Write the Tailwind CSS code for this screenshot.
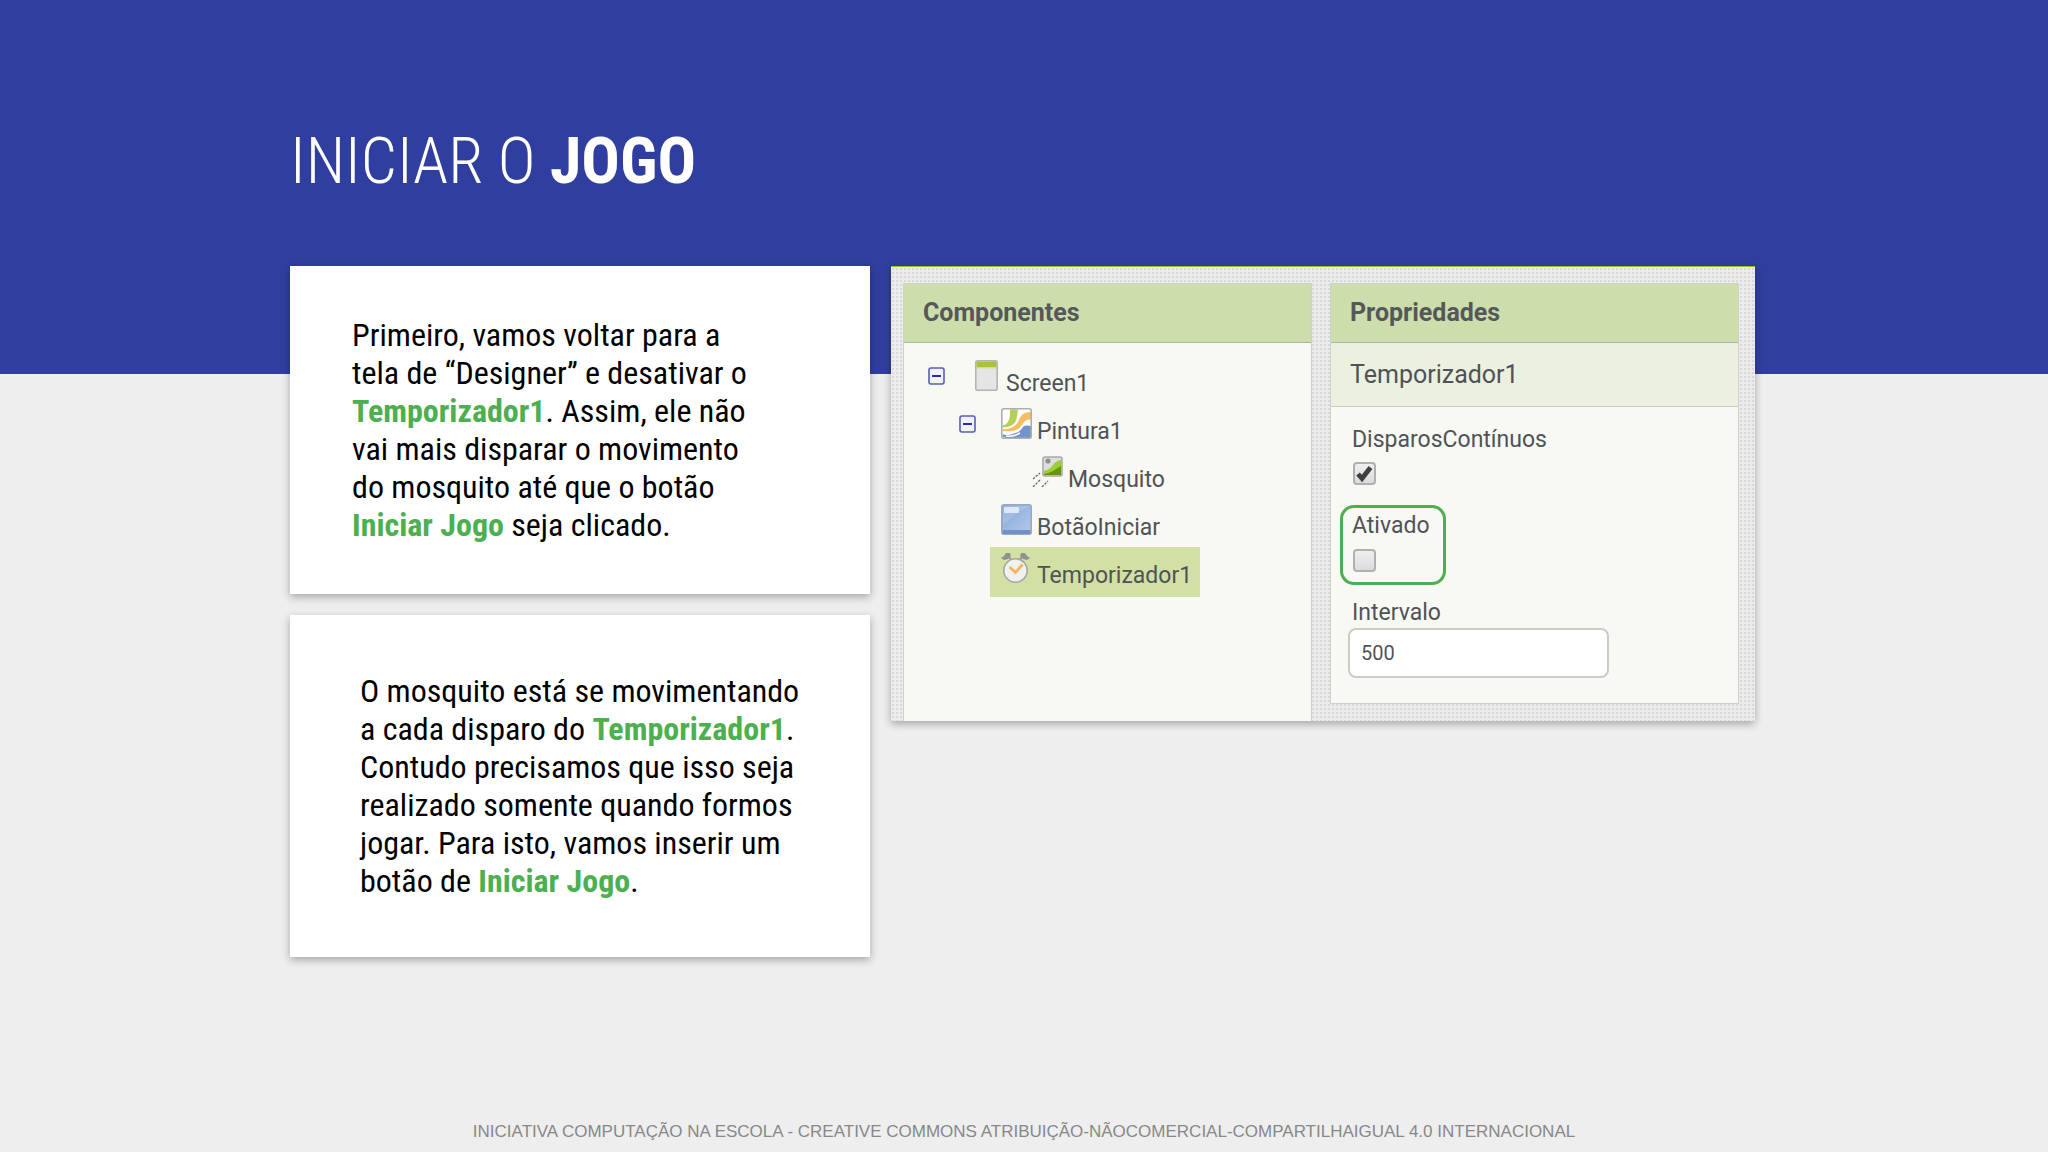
<!DOCTYPE html>
<html lang="pt-BR">

<head>
    <meta charset="UTF-8">
    <meta name="viewport" content="width=device-width, initial-scale=1.0">
    <script src="https://cdn.jsdelivr.net/npm/@tailwindcss/browser@4"></script>
    <title>Iniciar o Jogo</title>
</head>

<body class="flex min-h-screen flex-col bg-[#eeeeee] font-['Roboto_Condensed','Liberation_Sans_Narrow',Roboto,sans-serif] text-black">
    <header class="h-[374px] bg-[#303f9f] px-[290px] pt-[124px]">
        <h1 class="text-[64px] leading-[76px] font-light text-white">INICIAR O <b class="font-bold">JOGO</b></h1>
    </header>

    <main class="-mt-[108px] grid grid-cols-[580fr_864fr] items-start gap-[21px] pr-[293px] pl-[290px]">
        <div class="flex flex-col gap-[21px]">
            <section class="bg-white py-[50px] pl-[62px] shadow-[0_3px_8px_rgba(0,0,0,0.3)]">
                <p class="text-[32px] leading-[38px]">
                    Primeiro, vamos voltar para a<br>
                    tela de “Designer” e desativar o<br>
                    <b class="text-[#4caf50]">Temporizador1</b>. Assim, ele não<br>
                    vai mais disparar o movimento<br>
                    do mosquito até que o botão<br>
                    <b class="text-[#4caf50]">Iniciar Jogo</b> seja clicado.
                </p>
            </section>
            <section class="bg-white py-[57px] pl-[70px] shadow-[0_3px_8px_rgba(0,0,0,0.3)]">
                <p class="text-[32px] leading-[38px]">
                    O mosquito está se movimentando<br>
                    a cada disparo do <b class="text-[#4caf50]">Temporizador1</b>.<br>
                    Contudo precisamos que isso seja<br>
                    realizado somente quando formos<br>
                    jogar. Para isto, vamos inserir um<br>
                    botão de <b class="text-[#4caf50]">Iniciar Jogo</b>.
                </p>
            </section>
        </div>

        <!-- App Inventor designer -->
        <div class="grid h-[455px] grid-cols-2 gap-[18px] border-t border-[#8fc31f] bg-[#ececec] bg-[radial-gradient(circle_at_2px_2px,#d8d8d8_1px,transparent_1px)] bg-size-[4px_4px] pt-4 pr-4 pl-3 font-[Roboto,sans-serif] text-[#4f5358] shadow-[0_3px_8px_rgba(0,0,0,0.3)]">
            <section class="border-x border-t border-[#cfcfcf] bg-[#f8f9f2]">
                <h2 class="border-b border-[#b0b3ac] bg-[#cdddab] pl-[19px] text-[25px] leading-[58px] font-bold text-[#55585a]">Componentes</h2>
                <ul class="pt-3 pl-6 text-[23px] leading-[48px]">
                    <li class="flex h-12 items-start pt-[5px]">
                        <button class="mt-[7px] mr-[30px]" aria-label="Recolher Screen1">
                            <svg width="17" height="18" viewBox="0 0 17 18"><rect x="1" y="1" width="15" height="16" rx="2" fill="#f1f2f6" stroke="#5560b8" stroke-width="1.6"/><path d="M4 9h9" stroke="#1414b4" stroke-width="1.8"/></svg>
                        </button>
                        <svg class="mr-2" width="23" height="31" viewBox="0 0 23 31"><rect x=".8" y=".8" width="21.4" height="29.4" rx="2" fill="#e5e5e5" stroke="#b4b4b4" stroke-width="1.6"/><path d="M1.6 1.6h19.8v5.4H1.6z" fill="#a9c333"/><path d="M1.6 7h19.8v1.4H1.6z" fill="#cfdc9c"/></svg>
                        <span>Screen1</span>
                    </li>
                    <li class="flex h-12 items-start pt-[5px] pl-[31px]">
                        <button class="mt-[7px] mr-[25px]" aria-label="Recolher Pintura1">
                            <svg width="17" height="18" viewBox="0 0 17 18"><rect x="1" y="1" width="15" height="16" rx="2" fill="#f1f2f6" stroke="#5560b8" stroke-width="1.6"/><path d="M4 9h9" stroke="#1414b4" stroke-width="1.8"/></svg>
                        </button>
                        <svg class="mr-[5px]" width="31" height="31" viewBox="0 0 31 31"><rect x="1" y="1" width="29" height="29" rx="1.5" fill="#fdfdfd"/><path d="M9 1.5h8c-1 7-1 12-5 15-3 2-6 3-10.500 3v-2c5-1 8-5 7.500-16z" fill="#b3d057"/><path d="M30 4v7c-5 1-7 2-9 6-3 5-9 7-19.500 6v-2c8 0 13-2 16-8 3-7 6-9 12.500-9z" fill="#f7bd62"/><path d="M30 18v12H5c-2-1-3-1-3.500-2v-2c4 2 7 1 10 0 4-1 7-2 9-5 2-4 5-4 9.500-3z" fill="#7394cb"/><path d="M5 28c4 1 7 0 10-1l4-2" fill="none" stroke="#fff" stroke-width="1.5"/><rect x=".8" y=".8" width="29.4" height="29.4" rx="2" fill="none" stroke="#adadad" stroke-width="1.6"/></svg>
                        <span>Pintura1</span>
                    </li>
                    <li class="flex h-12 items-start pt-[5px] pl-[104px]">
                        <svg class="mr-[5px]" width="31" height="31" viewBox="0 0 31 31"><rect x="11" y="1" width="19" height="19" rx="2" fill="#dedede" stroke="#a9a9a9" stroke-width="1.6"/><path d="M12 15c3-1 6-2 8-5 3-4 5-5 9-6v15H12z" fill="#9dce35"/><path d="M12 18c6-1 11-4 17-8v9H12z" fill="#66950f"/><circle cx="16" cy="5" r="2.6" fill="#909090"/><path d="M1 23l7-6M1 31l8-8M10 31l6-6" fill="none" stroke="#666" stroke-width="1.3" stroke-dasharray="2.5 1.2"/></svg>
                        <span>Mosquito</span>
                    </li>
                    <li class="flex h-12 items-start pt-[5px] pl-[73px]">
                        <svg class="mr-[5px]" width="31" height="31" viewBox="0 0 31 31"><defs><linearGradient id="botao" x1="0" y1="0" x2="1" y2="1"><stop offset="0" stop-color="#84a6dc"/><stop offset="1" stop-color="#b4cae9"/></linearGradient></defs><rect x=".8" y=".8" width="29.4" height="29.4" rx="2" fill="url(#botao)" stroke="#9ba9c0" stroke-width="1.6"/><path d="M2 20c5-1 9-9 17-13 4-2 7-3 10-5H2z" fill="#fff" fill-opacity=".15"/><path d="M1.6 26h27.8v4H1.6z" fill="#7290c8"/><rect x="3" y="3" width="15" height="6" rx="1" fill="#e9f0fa" fill-opacity=".85"/></svg>
                        <span>BotãoIniciar</span>
                    </li>
                    <li class="ml-[62px] flex h-[50px] w-[210px] items-start bg-[#d2e0a4] pt-[5px] pl-[11px]">
                        <svg class="mr-[5px]" width="31" height="31" viewBox="0 0 31 31"><path d="M0 6l3-2 2-3h4l1 3-3 3-4 1zM29 6l-3-2-2-3h-4l-1 3 3 3 4 1z" fill="#8f9291"/><path d="M8 5l3 4M21 5l-3 4" stroke="#8f9291" stroke-width="2"/><circle cx="14.5" cy="18.500" r="11.7" fill="#f1f1f0" stroke="#a4a6a2" stroke-width="1.6"/><path d="M8.500 15l6 5.500 7-8" fill="none" stroke="#f3b564" stroke-width="2.8"/></svg>
                        <span>Temporizador1</span>
                    </li>
                </ul>
            </section>

            <section class="mb-[17px] border border-[#cfcfcf] bg-[#f8f9f2]">
                <h2 class="border-b border-[#b0b3ac] bg-[#cdddab] pl-[19px] text-[25px] leading-[58px] font-bold text-[#55585a]">Propriedades</h2>
                <p class="border-b border-[#c9ccc4] bg-[#ebf1de] pl-[19px] text-[25px] leading-[63px]">Temporizador1</p>
                <form class="pt-[18px] pl-[17px] text-[23px] leading-[30px]">
                    <div class="flex flex-col items-start gap-[7px] pl-1">
                        <label for="disparos">DisparosContínuos</label>
                        <span class="relative ml-px block size-[23px]">
                            <input id="disparos" type="checkbox" checked class="block size-[23px] appearance-none rounded-[4px] border-2 border-[#b0b0b0] bg-linear-to-b from-[#efefef] to-[#dcdcdc]">
                            <svg class="pointer-events-none absolute top-0 left-0" width="23" height="23" viewBox="0 0 23 23"><path d="M5 12l4 4.500 8.500-11" fill="none" stroke="#3f3f3f" stroke-width="4.800"/></svg>
                        </span>
                    </div>
                    <div class="mt-5 -ml-2 flex h-[80px] w-[106px] flex-col items-start gap-2 rounded-[14px] border-3 border-[#4caf50] pt-[3px] pl-[9px]">
                        <label for="ativado">Ativado</label>
                        <input id="ativado" type="checkbox" class="ml-px size-[23px] appearance-none rounded-[4px] border-2 border-[#b0b0b0] bg-linear-to-b from-[#efefef] to-[#dcdcdc]">
                    </div>
                    <label for="intervalo" class="mt-[13px] block pl-1">Intervalo</label>
                    <input id="intervalo" type="text" value="500" class="block h-[50px] w-[261px] rounded-lg border-2 border-[#cbccc8] bg-white pl-[11px] text-xl">
                </form>
            </section>
        </div>
    </main>

    <footer class="mt-auto pb-[10px] text-center font-['Liberation_Sans',Arial,sans-serif] text-[17px] leading-5 text-[#888888]">
        INICIATIVA COMPUTAÇÃO NA ESCOLA - CREATIVE COMMONS ATRIBUIÇÃO-NÃOCOMERCIAL-COMPARTILHAIGUAL 4.0 INTERNACIONAL
    </footer>
</body>

</html>
